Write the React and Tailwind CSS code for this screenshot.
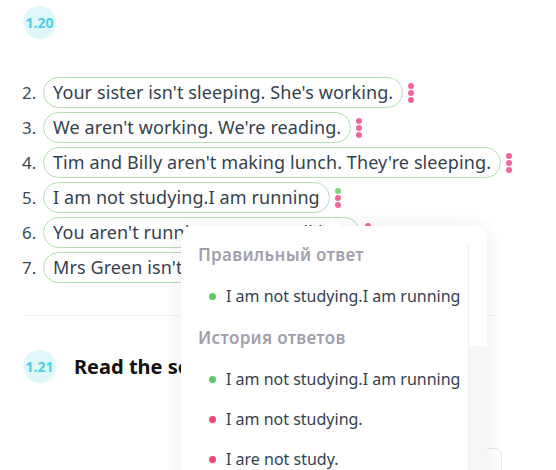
import React from "react";

const sentences = [
    { n: 2, text: "Your sister isn't sleeping. She's working.", dots: ["p", "p", "p"] },
    { n: 3, text: "We aren't working. We're reading.", dots: ["p", "p", "p"] },
    { n: 4, text: "Tim and Billy aren't making lunch. They're sleeping.", dots: ["p", "p", "p"] },
    { n: 5, text: "I am not studying.I am running", dots: ["g", "p", "p"] },
    { n: 6, text: "You aren't running. You're walking.", dots: ["p", "p", "p"] },
    { n: 7, text: "Mrs Green isn't cooking. She's reading.", dots: ["p", "p", "p"] },
];

const history = [
    { ok: true, text: "I am not studying.I am running" },
    { ok: false, text: "I am not studying." },
    { ok: false, text: "I are not study." },
];

function Badge({ label }) {
    return (
        <div className="w-[33px] h-[33px] rounded-full bg-[#e0f7fa] flex items-center justify-center text-[14px] font-bold text-[#4dd0e1] shrink-0">
            {label}
        </div>
    );
}

function Dots({ dots }) {
    return (
        <div className="flex flex-col gap-[1px] ml-[5px]">
            {dots.map((d, i) => (
                <span
                    key={i}
                    className={
                        d === "g"
                            ? "w-[6px] h-[6px] rounded-full bg-[#7ed67e]"
                            : "w-[6px] h-[6px] rounded-full bg-[#f2679a]"
                    }
                />
            ))}
        </div>
    );
}

function AnswerItem({ ok, text }) {
    return (
        <div className="flex items-center h-[40px] pl-[11px] whitespace-nowrap">
            <span
                className={
                    ok
                        ? "w-[7px] h-[7px] rounded-full bg-[#5ccb62] mr-[10px] shrink-0"
                        : "w-[7px] h-[7px] rounded-full bg-[#f4436c] mr-[10px] shrink-0"
                }
            />
            <span className="text-[16px] text-[#34424f]">{text}</span>
        </div>
    );
}

export default function App() {
    return (
        <div
            className="relative w-[556px] h-[470px] overflow-hidden bg-white"
            style={{ fontFamily: '"Noto Sans", "Open Sans", sans-serif' }}
        >
            <div className="pl-[22px] pr-[30px]">
                <div className="pt-[6px] pl-[1px]">
                    <Badge label="1.20" />
                </div>

                {/* Список предложений */}
                <div className="mt-[38px] flex flex-col gap-[4px]">
                    {sentences.map((s) => (
                        <div key={s.n} className="flex items-center h-[31px]">
                            <span className="w-[21px] text-[17px] text-[#3d4a56]">{s.n}.</span>
                            <div className="h-[31px] px-[9px] rounded-full border border-[#b3e0b0] flex items-center text-[18px] tracking-[0.1px] text-[#34424f] whitespace-nowrap">
                                {s.text}
                            </div>
                            <Dots dots={s.dots} />
                        </div>
                    ))}
                </div>

                <div className="mt-[32px] border-t border-[#eef0f3] w-[474px]" />

                <div className="mt-[34px] flex items-center">
                    <div className="pl-[1px]">
                        <Badge label="1.21" />
                    </div>
                    <h2 className="ml-[18px] text-[20px] font-bold text-[#111] whitespace-nowrap">
                        Read the sentences.
                    </h2>
                </div>

                <div className="mt-[65px] ml-[178px] w-[302px] h-[60px] rounded-[8px] border border-[#e6e7eb]" />
            </div>

            {/* Поповер с ответами */}
            <div className="absolute left-[181px] top-[226px] w-[306px] h-[280px] bg-white rounded-[14px] shadow-[0_0_20px_rgba(40,40,70,0.08)]">
                <div className="absolute -top-[6px] left-[146px] w-[12px] h-[12px] bg-white rotate-45" />
                <div className="relative flex h-full">
                    <div className="w-[288px] border-r border-[#efeff2] pl-[17px] mt-[17px]">
                        <div className="text-[17px] tracking-[0.3px] font-semibold text-[#a29fae] h-[24px] flex items-center whitespace-nowrap">
                            Правильный ответ
                        </div>
                        <div className="mt-[9px]">
                            <AnswerItem ok={true} text="I am not studying.I am running" />
                        </div>
                        <div className="mt-[10px] text-[17px] tracking-[0.3px] font-semibold text-[#a29fae] h-[24px] flex items-center whitespace-nowrap">
                            История ответов
                        </div>
                        <div className="mt-[9px]">
                            {history.map((h, i) => (
                                <AnswerItem key={i} ok={h.ok} text={h.text} />
                            ))}
                        </div>
                    </div>
                    <div className="flex-1 flex flex-col pt-[120px]">
                        <div className="flex-1 bg-[#f6f6f8]" />
                    </div>
                </div>
            </div>
        </div>
    );
}
